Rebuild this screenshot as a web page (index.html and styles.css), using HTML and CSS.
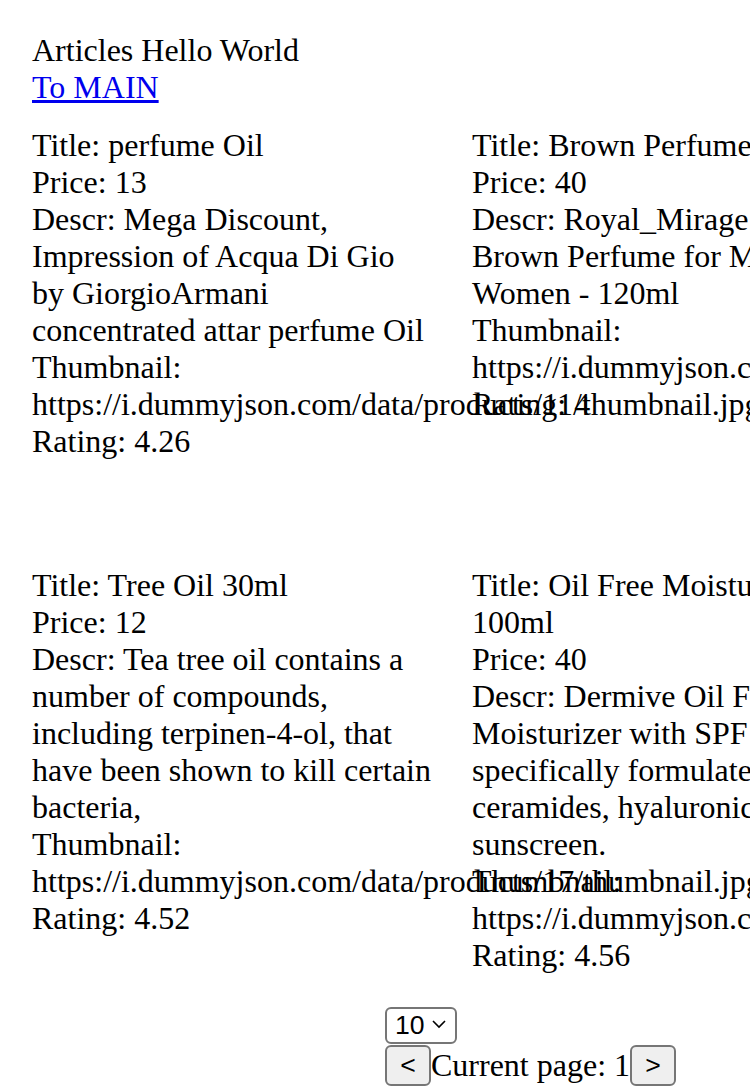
FILE: index.html
```html
<!DOCTYPE html>
<html>
<head>
<meta charset="utf-8">
<link rel="stylesheet" href="styles.css">
</head>
<body>
<div class="page">
  <div class="header">Articles Hello World</div>
  <a class="main-link" href="#">To MAIN</a>
  <div class="grid">
    <div class="card">
      <div>Title: perfume Oil</div>
      <div>Price: 13</div>
      <div>Descr: Mega Discount, Impression of Acqua Di Gio by GiorgioArmani concentrated attar perfume Oil</div>
      <div>Thumbnail: https://i.dummyjson.com/data/products/11/thumbnail.jpg</div>
      <div>Rating: 4.26</div>
    </div>
    <div class="card">
      <div>Title: Brown Perfume</div>
      <div>Price: 40</div>
      <div>Descr: Royal_Mirage Sport Brown Perfume for Men &amp; Women - 120ml</div>
      <div>Thumbnail: https://i.dummyjson.com/data/products/12/thumbnail.jpg</div>
      <div>Rating: 4</div>
    </div>
    <div class="card">
      <div>Title: Tree Oil 30ml</div>
      <div>Price: 12</div>
      <div>Descr: Tea tree oil contains a number of compounds, including terpinen-4-ol, that have been shown to kill certain bacteria,</div>
      <div>Thumbnail: https://i.dummyjson.com/data/products/17/thumbnail.jpg</div>
      <div>Rating: 4.52</div>
    </div>
    <div class="card">
      <div>Title: Oil Free Moisturizer 100ml</div>
      <div>Price: 40</div>
      <div>Descr: Dermive Oil Free Moisturizer with SPF 20 is specifically formulated with ceramides, hyaluronic acid &amp; sunscreen.</div>
      <div>Thumbnail: https://i.dummyjson.com/data/products/18/thumbnail.jpg</div>
      <div>Rating: 4.56</div>
    </div>
  </div>
  <div class="pager">
    <div class="select-wrap">
      <select class="size-select">
        <option>10</option>
        <option>20</option>
        <option>30</option>
      </select>
      <svg class="chev" width="16" height="10" viewBox="0 0 16 10"><path d="M2 2 L8 8 L14 2" fill="none" stroke="#000" stroke-width="1.6"/></svg>
    </div>
    <div class="pager-row">
      <button class="pbtn">&lt;</button><span class="current">Current page: 1</span><button class="pbtn">&gt;</button>
    </div>
  </div>
</div>
</body>
</html>
```

FILE: styles.css
```css
html, body {
  margin: 0;
  padding: 0;
  background: #fff;
}
body {
  font-family: "Liberation Serif", "Times New Roman", serif;
  font-size: 32px;
  color: #000;
  overflow: hidden;
}
.page {
  padding: 32px;
}
.main-link {
  color: #0000ee;
  text-decoration: underline;
}
.grid {
  display: grid;
  grid-template-columns: 400px 400px;
  grid-auto-rows: 400px;
  gap: 40px;
  margin-top: 21px;
  margin-bottom: 38px;
}
.card {
  width: 400px;
  height: 400px;
}
.pager {
  display: flex;
  flex-direction: column;
  align-items: flex-start;
  margin-left: 353px;
}
.select-wrap {
  position: relative;
  display: inline-block;
}
.size-select {
  appearance: none;
  -webkit-appearance: none;
  font-family: "Liberation Sans", Arial, sans-serif;
  font-size: 26.6px;
  width: 72px;
  height: 37px;
  padding: 0 0 0 8px;
  border: 2px solid #767676;
  border-radius: 6px;
  background: #fff;
  color: #000;
  line-height: 32px;
}
.chev {
  position: absolute;
  right: 10px;
  top: 14px;
  pointer-events: none;
}
.pager-row {
  display: flex;
  align-items: center;
  margin-top: 1px;
}
.pbtn {
  font-family: "Liberation Sans", Arial, sans-serif;
  font-size: 26.6px;
  height: 41px;
  width: 46px;
  padding: 0;
  border: 2px solid #767676;
  border-radius: 6px;
  background: #efefef;
  color: #000;
}
.current {
  line-height: 37px;
}
```
